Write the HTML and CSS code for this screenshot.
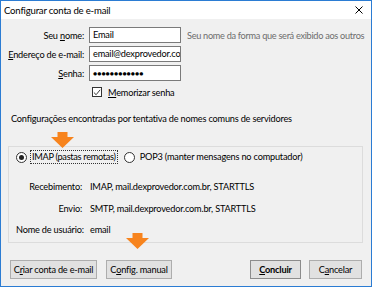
FILE: index.html
```html
<!DOCTYPE html>
<html lang="pt-BR">
<head>
<meta charset="utf-8">
<title>Configurar conta de e-mail</title>
<link rel="stylesheet" href="styles.css">
</head>
<body>
<div class="dialog">
  <div class="titlebar">
    <span class="title">Configurar conta de e-mail</span>
    <svg class="close" width="8" height="8" viewBox="0 0 8 8"><path d="M0.5 0.5 L7.5 7.5 M7.5 0.5 L0.5 7.5" stroke="#000" stroke-width="1"/></svg>
  </div>
  <div class="content">
    <div class="form">
      <label class="lbl">Seu <u>n</u>ome:</label>
      <div class="field"><span class="input">Email</span><span class="hint">Seu nome da forma que será exibido aos outros</span></div>
      <label class="lbl"><u>E</u>ndereço de e-mail:</label>
      <div class="field"><span class="input">email@dexprovedor.com.br</span></div>
      <label class="lbl"><u>S</u>enha:</label>
      <div class="field"><span class="input pwd">●●●●●●●●●●●●</span></div>
      <span></span>
      <div class="field check"><span class="box"><svg width="9" height="9" viewBox="0 0 9 9"><path d="M1 4.5 L3.5 7 L8 1.5" fill="none" stroke="#222" stroke-width="1"/></svg></span><span><u>M</u>emorizar senha</span></div>
    </div>
    <p class="found">Configurações encontradas por tentativa de nomes comuns de servidores</p>
    <div class="group">
      <div class="radios">
        <span class="radio on"></span><span class="rlabel focus">IMAP (pastas remotas)</span>
        <span class="radio"></span><span class="rlabel">POP3 (manter mensagens no computador)</span>
      </div>
      <div class="info">
        <span class="k">Recebimento:</span><span>IMAP, mail.dexprovedor.com.br, STARTTLS</span>
        <span class="k">Envio:</span><span>SMTP, mail.dexprovedor.com.br, STARTTLS</span>
        <span class="k">Nome de usuário:</span><span>email</span>
      </div>
    </div>
    <div class="buttons">
      <button class="btn b-criar">C<u>r</u>iar conta de e-mail</button>
      <button class="btn b-config">C<u>o</u>nfig. manual</button>
      <span class="spacer"></span>
      <button class="btn default"><u>C</u>oncluir</button>
      <button class="btn b-cancel">C<u>a</u>ncelar</button>
    </div>
    <svg class="arrow a1" width="23" height="16" viewBox="0 0 23 16"><polygon points="6.5,0 16.5,0 16.5,5 23,5 11.5,16 0,5 6.5,5" fill="#f7841e"/></svg>
    <svg class="arrow a2" width="23" height="16" viewBox="0 0 23 16"><polygon points="6.5,0 16.5,0 16.5,5 23,5 11.5,16 0,5 6.5,5" fill="#f7841e"/></svg>
  </div>
</div>
</body>
</html>
```
FILE: styles.css
```css
* { box-sizing: border-box; }
html, body { margin: 0; padding: 0; }
body {
  width: 372px;
  height: 287px;
  font-family: Lato, "Noto Sans", sans-serif;
  font-size: 9.2px;
  letter-spacing: -0.2px;
  color: #000;
  background: #fff;
  overflow: hidden;
}
u { text-decoration: underline; text-underline-offset: 1px; }
.dialog {
  width: 372px;
  height: 287px;
  border: 1px solid #2b7cd3;
  display: flex;
  flex-direction: column;
  background: #f0f0f0;
  overflow: hidden;
}
.titlebar {
  height: 18px;
  background: #fff;
  display: flex;
  align-items: center;
  justify-content: space-between;
  padding: 0 8px 0 3px;
  flex: none;
}
.title { font-size: 9.6px; }
.content {
  position: relative;
  flex: 1;
  padding: 8px 8px 0 7px;
}
.form {
  display: grid;
  grid-template-columns: 76px 1fr;
  column-gap: 5px;
  row-gap: 3px;
  align-items: center;
}
.lbl { text-align: right; white-space: nowrap; }
.field { display: flex; align-items: center; height: 16px; }
.input {
  width: 92px;
  height: 16px;
  border: 1px solid #7a7a7a;
  background: #fff;
  padding: 0 3px;
  line-height: 14px;
  overflow: hidden;
  white-space: nowrap;
  flex: none;
}
.pwd { font-size: 7px; letter-spacing: 0px; line-height: 14px; }
.hint { color: #6d6d6d; margin-left: 6px; white-space: nowrap; letter-spacing: -0.3px; }
.check { padding-left: 3px; gap: 6px; }
.box {
  width: 10px; height: 10px;
  border: 1px solid #333;
  background: #fff;
  display: flex; align-items: center; justify-content: center;
}
.found { margin: 13px 0 0 3px; white-space: nowrap; line-height: 12px; }
.group {
  margin-top: 21px;
  height: 97px;
  width: 355px;
  border: 1px solid #dcdcdc;
  padding: 3px 0 0 7px;
}
.radios { display: flex; align-items: center; height: 14px; }
.radio {
  width: 11px; height: 11px;
  border: 1px solid #333;
  border-radius: 50%;
  background: #fff;
  position: relative;
  flex: none;
}
.radio.on::after {
  content: "";
  position: absolute;
  left: 2px; top: 2px;
  width: 5px; height: 5px;
  border-radius: 50%;
  background: #222;
}
.rlabel { margin-left: 3px; padding: 0 1px; border: 1px solid transparent; line-height: 12px; margin-right: 6px; white-space: nowrap; }
.rlabel.focus { border: 1px dotted #333; letter-spacing: -0.3px; }
.info {
  margin-top: 16px;
  display: grid;
  grid-template-columns: 66px 1fr;
  column-gap: 8px;
  row-gap: 8px;
  line-height: 13.5px;
}
.k { text-align: right; white-space: nowrap; }
.buttons {
  display: flex;
  margin-top: 17px;
  padding-left: 2px;
  gap: 9px;
}
.spacer { flex: 1; }
.btn {
  font: inherit;
  letter-spacing: inherit;
  height: 19px;
  padding: 0;
  background: #e1e1e1;
  border: 1px solid #adadad;
  color: #000;
  white-space: nowrap;
  flex: none;
}
.b-criar { width: 87px; }
.b-config { width: 66px; }
.btn.default { font-weight: bold; width: 51px; border-color: #8c8c8c; margin-right: -1px; }
.b-cancel { width: 53px; margin-right: 1px; }
.arrow { position: absolute; }
.a1 { left: 50px; top: 113px; }
.a2 { left: 125px; top: 214px; }
```
